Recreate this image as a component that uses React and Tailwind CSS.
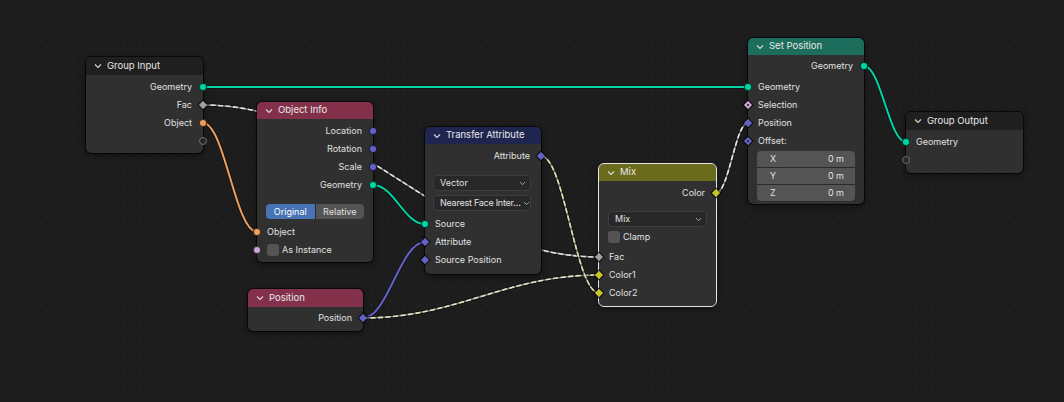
import { ChevronDown } from "lucide-react";

// socket look per data type
const SOCKET_BG = {
  geo: "bg-[#00d6a3]",
  vec: "bg-[#6363c7]",
  float: "bg-[#a1a1a1]",
  obj: "bg-[#ed9e5c]",
  bool: "bg-[#cca6d6]",
  col: "bg-[#c7c729]",
};

function Socket({ side, type, shape = "circle" }) {
  const pos =
    side === "out"
      ? "right-0 translate-x-1/2"
      : "left-0 -translate-x-1/2";
  if (shape === "empty") {
    return (
      <div
        className={`absolute top-1/2 -translate-y-1/2 ${pos} h-[8px] w-[8px] rounded-full border border-[#6f6f6f] bg-[#262626]`}
      />
    );
  }
  if (shape === "circle") {
    return (
      <div
        className={`absolute top-1/2 -translate-y-1/2 ${pos} h-[8px] w-[8px] rounded-full border border-black/70 ${SOCKET_BG[type]}`}
      />
    );
  }
  return (
    <div
      className={`absolute top-1/2 -translate-y-1/2 ${pos} flex h-[6px] w-[6px] rotate-45 items-center justify-center outline outline-black/70 ${SOCKET_BG[type]}`}
    >
      {shape === "dot" && <div className="h-[2px] w-[2px] rounded-full bg-[#1a1a1a]" />}
    </div>
  );
}

function Row({ label, side = "in", type, shape, children }) {
  return (
    <div
      className={`relative flex h-[18px] items-center ${
        side === "out" ? "justify-end pr-[11px]" : "pl-[10px]"
      }`}
    >
      {children}
      {label && <span>{label}</span>}
      {type && <Socket side={side} type={type} shape={shape} />}
    </div>
  );
}

function Chevron() {
  return (
    <svg width="8" height="6" viewBox="0 0 8 6" className="shrink-0">
      <path d="M1 1.5 L4 4.5 L7 1.5" fill="none" stroke="#d8d8d8" strokeWidth="1.1" />
    </svg>
  );
}

function Node({ title, header, className, selected, children }) {
  return (
    <div
      className={`absolute rounded-[5px] bg-[#303030] shadow-[0_2px_6px_rgba(0,0,0,0.55)] outline ${
        selected ? "outline-[#e6e6e6]" : "outline-black/60"
      } ${className}`}
    >
      <div className={`flex h-[17px] items-center gap-[5px] rounded-t-[5px] pl-[8px] text-[9.5px] text-[#e8e8e8] ${header}`}>
        <Chevron />
        <span>{title}</span>
      </div>
      {children}
    </div>
  );
}

function Dropdown({ label, className = "", textClass = "" }) {
  return (
    <div
      className={`mx-[9px] flex items-center justify-between gap-[1px] rounded-[4px] border border-[#3d3d3d] bg-[#282828] pl-[6px] pr-[3px] ${className}`}
    >
      <span className={`whitespace-nowrap ${textClass}`}>{label}</span>
      <ChevronDown size={9} strokeWidth={2} className="shrink-0 text-[#cfcfcf]" />
    </div>
  );
}

function Checkbox() {
  return <div className="h-[12px] w-[12px] shrink-0 rounded-[3px] bg-[#545454]" />;
}

// bezier in the Blender noodle style
function link(x1, y1, x2, y2) {
  const h = Math.max(Math.abs(x2 - x1) * 0.4, 8);
  return `M${x1} ${y1} C${x1 + h} ${y1} ${x2 - h} ${y2} ${x2} ${y2}`;
}

const LINKS = [
  { d: link(203, 87, 748, 87), c: "#00d6a3" },
  { d: link(203, 105, 599, 257), c: "#e2e2e2", field: true },
  { d: link(203, 123, 257, 232), c: "#ed9e5c" },
  { d: link(373, 185, 425, 224), c: "#00d6a3" },
  { d: link(363, 318, 425, 242), c: "#6363c7" },
  { d: link(363, 318, 599, 275), c: "#e4e4c4", field: true },
  { d: link(541, 156, 599, 293), c: "#e2e2a8", field: true },
  { d: link(716, 193, 748, 123), c: "#e6e6ee", field: true },
  { d: link(864, 66, 906, 142), c: "#00d6a3" },
];

export default function App() {
  return (
    <div className="relative h-[402px] w-[1064px] overflow-hidden bg-[#1d1d1d] bg-[radial-gradient(circle,#252525_1px,transparent_1.2px)] bg-size-[16.5px_16.5px] font-['Inter','Noto_Sans',sans-serif] text-[9px] text-[#e0e0e0]">
      <svg className="absolute inset-0" width="1064" height="402">
        {LINKS.map((l, i) => (
          <g key={i} fill="none">
            <path d={l.d} stroke="#0d0d0d" strokeWidth="3.5" strokeOpacity="0.7" />
            {l.field ? (
              <>
                <path d={l.d} stroke="#7c7c7c" strokeWidth="1.6" />
                <path d={l.d} stroke={l.c} strokeWidth="1.6" strokeDasharray="5 2.5" />
              </>
            ) : (
              <path d={l.d} stroke={l.c} strokeWidth="2" />
            )}
          </g>
        ))}
      </svg>

      {/* Group Input */}
      <Node title="Group Input" header="bg-[#1f1f1f] h-[18px]" className="left-[86px] top-[57px] w-[117px] pb-[3px]">
        <div className="pt-[3px]">
          <Row label="Geometry" side="out" type="geo" />
          <Row label="Fac" side="out" type="float" shape="diamond" />
          <Row label="Object" side="out" type="obj" />
          <Row side="out" type="geo" shape="empty" />
        </div>
      </Node>

      {/* Object Info */}
      <Node title="Object Info" header="bg-[#83314a]" className="left-[257px] top-[102px] w-[116px] pb-[3px]">
        <div className="pt-[3px]">
          <Row label="Location" side="out" type="vec" />
          <Row label="Rotation" side="out" type="vec" />
          <Row label="Scale" side="out" type="vec" />
          <Row label="Geometry" side="out" type="geo" />
          <div className="flex h-[29px] items-start px-[9px] pt-[10px]">
            <div className="flex h-[15px] w-full overflow-hidden rounded-[4px]">
              <div className="flex flex-1 items-center justify-center bg-[#4772b3] text-white">Original</div>
              <div className="flex flex-1 items-center justify-center border-l border-[#2a2a2a] bg-[#545454]">Relative</div>
            </div>
          </div>
          <Row label="Object" type="obj" />
          <Row type="bool">
            <div className="mr-[3px]">
              <Checkbox />
            </div>
            <span>As Instance</span>
          </Row>
        </div>
      </Node>

      {/* Transfer Attribute */}
      <Node title="Transfer Attribute" header="bg-[#1e2650]" className="left-[425px] top-[127px] w-[116px] pb-[5px]">
        <div className="pt-[3px]">
          <Row label="Attribute" side="out" type="vec" shape="diamond" />
          <div className="flex flex-col gap-[4px] pb-[4px] pt-[10px]">
            <Dropdown label="Vector" className="ml-[8px] mr-[10px] h-[16px]" />
            <Dropdown
              label="Nearest Face Inter…"
              textClass="tracking-[-0.25px]"
              className="ml-[8px] mr-[10px] h-[16px]"
            />
          </div>
          <Row label="Source" type="geo" />
          <Row label="Attribute" type="vec" shape="diamond" />
          <Row label="Source Position" type="vec" shape="diamond" />
        </div>
      </Node>

      {/* Mix */}
      <Node title="Mix" header="bg-[#6b6b1e]" selected className="left-[599px] top-[164px] w-[117px] pb-[4px]">
        <div className="pt-[3px]">
          <Row label="Color" side="out" type="col" shape="diamond" />
          <Dropdown label="Mix" className="mt-[9px] h-[16px]" />
          <div className="mt-[1px] flex h-[18px] items-center gap-[3px] pl-[9px]">
            <Checkbox />
            <span>Clamp</span>
          </div>
          <div className="pt-[2px]">
            <Row label="Fac" type="float" shape="diamond" />
            <Row label="Color1" type="col" shape="diamond" />
            <Row label="Color2" type="col" shape="diamond" />
          </div>
        </div>
      </Node>

      {/* Set Position */}
      <Node title="Set Position" header="bg-[#1c6d5b]" className="left-[748px] top-[38px] w-[116px] pb-[3px]">
        <div className="pt-[2px]">
          <Row label="Geometry" side="out" type="geo" />
          <div className="pt-[3px]">
            <Row label="Geometry" type="geo" />
            <Row label="Selection" type="bool" shape="dot" />
            <Row label="Position" type="vec" shape="diamond" />
            <Row label="Offset:" type="vec" shape="dot" />
          </div>
          <div className="mx-[9px] mt-[1px] flex flex-col gap-[1px] overflow-hidden rounded-[4px] bg-[#2a2a2a]">
            {["X", "Y", "Z"].map((a) => (
              <div key={a} className="flex h-[16px] items-center justify-between bg-[#545454] pl-[13px] pr-[11px]">
                <span>{a}</span>
                <span>0 m</span>
              </div>
            ))}
          </div>
        </div>
      </Node>

      {/* Group Output */}
      <Node title="Group Output" header="bg-[#1f1f1f] h-[18px]" className="left-[906px] top-[112px] w-[117px] pb-[4px]">
        <div className="pt-[3px]">
          <Row label="Geometry" type="geo" />
          <Row type="geo" shape="empty" />
        </div>
      </Node>

      {/* Position */}
      <Node title="Position" header="bg-[#83314a] h-[18px]" className="left-[248px] top-[289px] w-[115px] pb-[4px]">
        <div className="pt-[2px]">
          <Row label="Position" side="out" type="vec" shape="diamond" />
        </div>
      </Node>
    </div>
  );
}
